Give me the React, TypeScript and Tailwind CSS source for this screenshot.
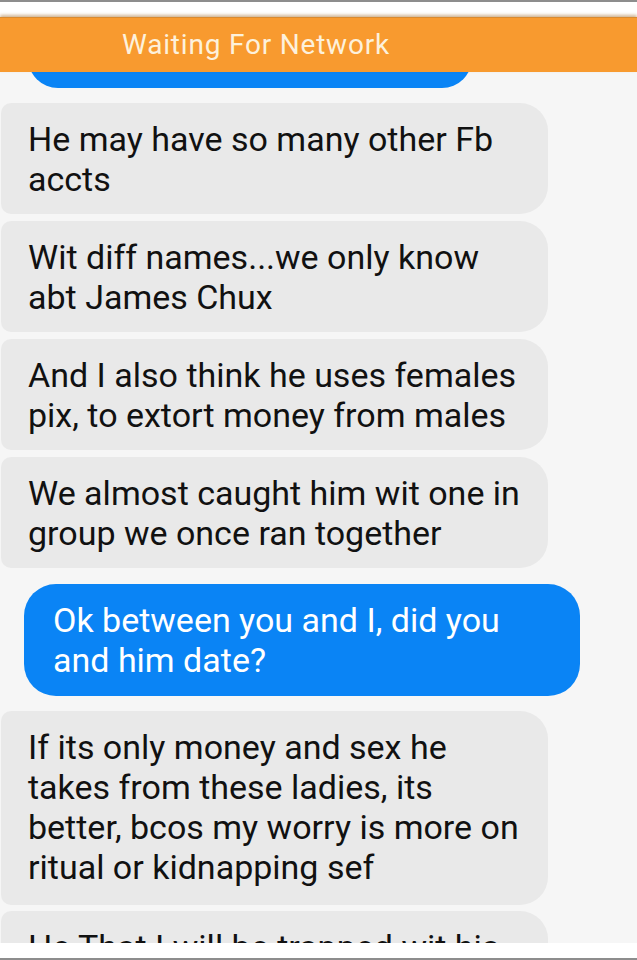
import React from "react";

const font = { fontFamily: "Roboto, 'Noto Sans', sans-serif" };

function Gray({ children, className = "" }: { children: React.ReactNode; className?: string }) {
  return (
    <div
      className={
        "ml-[1px] w-[547px] bg-[#e9e9e9] rounded-l-[10px] rounded-r-[28px] pl-[27px] pr-[10px] pt-[16px] pb-[15px] text-[34px] leading-[40px] text-[#111] whitespace-nowrap " +
        className
      }
    >
      {children}
    </div>
  );
}

export default function App() {
  return (
    <div className="w-[637px] h-[960px] flex flex-col overflow-hidden bg-white" style={font}>
      <div className="h-[2px] bg-[#8d8d8d] shrink-0" />
      <div className="h-[15px] bg-white shrink-0" />
      <div className="h-[55px] shrink-0 bg-[#f89a2f] shadow-[0_-2px_3px_rgba(150,90,20,0.45)] border-t border-[#d98a30] flex items-center pl-[122px] relative z-10">
        <span className="text-[28px] text-[#fdf1dc] tracking-[0.8px]">Waiting For Network</span>
      </div>
      <div className="h-[871px] shrink-0 bg-[#f6f6f6] overflow-hidden flex flex-col">
        <div className="ml-[28px] w-[444px] h-[16px] overflow-hidden shrink-0">
          <div className="h-[60px] -mt-[44px] rounded-[30px] bg-[#0a84f5]" />
        </div>
        <div className="h-[15px] shrink-0" />
        <div className="flex flex-col gap-[7px]">
          <Gray>He may have so many other Fb<br />accts</Gray>
          <Gray>Wit diff names...we only know<br />abt James Chux</Gray>
          <Gray>And I also think he uses females<br />pix, to extort money from males</Gray>
          <Gray>We almost caught him wit one in<br />group we once ran together</Gray>
        </div>
        <div className="mt-[16px] ml-[24px] w-[556px] bg-[#0a84f5] rounded-[32px] pl-[29px] pt-[16px] pb-[16px] text-[34px] leading-[40px] text-white shrink-0 whitespace-nowrap">
          Ok between you and I, did you<br />and him date?
        </div>
        <div className="mt-[15px] flex flex-col gap-[6px]">
          <Gray className="leading-[39px] pb-[18px]">
            If its only money and sex he<br />takes from these ladies, its<br />better, bcos my worry is more on<br />ritual or kidnapping sef
          </Gray>
          <Gray>He That I will be trapped wit his<br />phone</Gray>
        </div>
      </div>
      <div className="h-[15px] bg-white shrink-0" />
      <div className="h-[2px] bg-[#8d8d8d] shrink-0" />
    </div>
  );
}
